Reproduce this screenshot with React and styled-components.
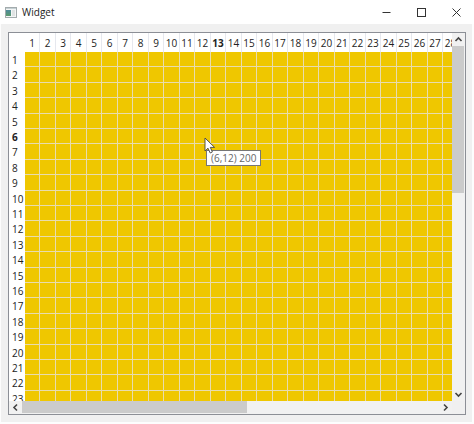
import React, { useState } from "react";
import styled, { createGlobalStyle } from "styled-components";

const GlobalStyle = createGlobalStyle`
  * {
    box-sizing: border-box;
  }
  body {
    margin: 0;
    background: #fdfdfd;
    font-family: "Open Sans", "Noto Sans", sans-serif;
    color: #222;
  }
`;

const Window = styled.div`
  display: flex;
  flex-direction: column;
  height: 100vh;
`;

const TitleBar = styled.header`
  display: flex;
  align-items: center;
  height: 24px;
  padding-left: 5px;
  background: #fff;
`;

const Title = styled.h1`
  flex: 1;
  margin: 0 0 0 5px;
  font-size: 10px;
  font-weight: 400;
  line-height: 24px;
`;

const WindowButton = styled.button`
  display: flex;
  align-items: center;
  justify-content: center;
  width: 35px;
  height: 24px;
  padding: 0;
  border: 0;
  background: transparent;
`;

const Body = styled.main`
  flex: 1;
  display: flex;
  min-height: 0;
  margin: 0 2px 2px 1px;
  padding: 8px 6px 7px 7px;
  background: #f0f0f0;
`;

const TableView = styled.div`
  flex: 1;
  display: grid;
  grid-template-columns: minmax(0, 1fr) 13px;
  grid-template-rows: minmax(0, 1fr) 13px;
  min-width: 0;
  border: 1px solid #8c8f96;
  background: #f0f0f0;
`;

const Viewport = styled.div`
  position: relative;
  overflow: hidden;
  background: #fff;
`;

const Grid = styled.table`
  table-layout: fixed;
  width: max-content;
  border-collapse: separate;
  border-spacing: 0;
  font-size: 10px;
  line-height: 14px;
`;

const Corner = styled.td`
  width: 16px;
  height: 19px;
  padding: 0;
`;

const ColumnHeader = styled.th`
  width: ${(props) => (props.$wide ? 16 : 15)}px;
  height: 19px;
  padding: 0;
  border-right: 1px solid #e6e8ee;
  font-weight: ${(props) => (props.$current ? 700 : 400)};
  text-align: center;
  white-space: nowrap;
`;

const HeaderText = styled.span`
  display: flex;
  justify-content: center;
`;

const RowHeader = styled.th`
  height: ${(props) => (props.$tall ? 16 : 15)}px;
  padding: 0 0 0 3px;
  font-weight: ${(props) => (props.$current ? 700 : 400)};
  text-align: left;
`;

const Cell = styled.td`
  padding: 0;
  border-right: 1px solid #e8dcae;
  border-bottom: 1px solid #e8dcae;
  background: #efc700;
`;

const ScrollBar = styled.div`
  display: flex;
  flex-direction: ${(props) => (props.$vertical ? "column" : "row")};
  background: #f1f1f1;
`;

const ScrollButton = styled.button`
  display: flex;
  align-items: center;
  justify-content: center;
  flex: none;
  width: 13px;
  height: 13px;
  padding: 0;
  border: 0;
  background: #f1f1f1;
`;

const Track = styled.div`
  flex: 1;
`;

const Thumb = styled.div`
  width: ${(props) => (props.$vertical ? "12px" : "54%")};
  height: ${(props) => (props.$vertical ? "43%" : "12px")};
  background: #cbcbcb;
`;

const Pointer = styled.svg`
  position: absolute;
  left: 195px;
  top: 104px;
`;

const Tooltip = styled.div`
  position: absolute;
  left: 197px;
  top: 117px;
  padding: 0 4px;
  border: 1px solid #767676;
  background: #fff;
  color: #666;
  font-size: 10px;
  line-height: 14px;
  white-space: nowrap;
`;

const numbers = Array.from({ length: 50 }, (_, i) => i + 1);

const isTall = (n) => n % 5 === 2 || n % 5 === 4;

const Arrow = ({ d }) => (
  <svg width="9" height="9" viewBox="0 0 9 9" fill="none" stroke="#444" strokeWidth="1.6">
    <path d={d} />
  </svg>
);

const AppIcon = () => (
  <svg width="12" height="11" viewBox="0 0 12 11">
    <defs>
      <linearGradient id="pane" x1="0" y1="0" x2="0" y2="1">
        <stop offset="0" stopColor="#4d8a9c" />
        <stop offset="1" stopColor="#5b9a6d" />
      </linearGradient>
    </defs>
    <rect x="0.5" y="0.5" width="11" height="10" fill="#f4f6f6" stroke="#a3abad" />
    <rect x="1" y="1" width="10" height="1" fill="#c5d0d3" />
    <rect x="1" y="3" width="5" height="6" fill="url(#pane)" />
    <rect x="7" y="3" width="3" height="6" fill="#dfe3e3" />
  </svg>
);

const App = () => {
  const [current] = useState({ row: 6, column: 13, value: 200 });

  return (
    <Window>
      <GlobalStyle />
      <TitleBar>
        <AppIcon />
        <Title>Widget</Title>
        <WindowButton aria-label="Minimize">
          <svg width="9" height="9" viewBox="0 0 9 9" stroke="#333">
            <path d="M0.5 4.5H8.5" />
          </svg>
        </WindowButton>
        <WindowButton aria-label="Maximize">
          <svg width="9" height="9" viewBox="0 0 9 9" stroke="#333" fill="none">
            <rect x="0.5" y="0.5" width="8" height="8" />
          </svg>
        </WindowButton>
        <WindowButton aria-label="Close">
          <svg width="9" height="9" viewBox="0 0 9 9" stroke="#333">
            <path d="M0.5 0.5L8.5 8.5M8.5 0.5L0.5 8.5" />
          </svg>
        </WindowButton>
      </TitleBar>
      <Body>
        <TableView>
          <Viewport>
            <Grid>
              <thead>
                <tr>
                  <Corner />
                  {numbers.map((n) => (
                    <ColumnHeader key={n} scope="col" $wide={n % 2 === 0} $current={n === current.column}>
                      <HeaderText>{n}</HeaderText>
                    </ColumnHeader>
                  ))}
                </tr>
              </thead>
              <tbody>
                {numbers.map((row) => (
                  <tr key={row}>
                    <RowHeader scope="row" $tall={isTall(row)} $current={row === current.row}>
                      {row}
                    </RowHeader>
                    {numbers.map((column) => (
                      <Cell key={column} />
                    ))}
                  </tr>
                ))}
              </tbody>
            </Grid>
            <Tooltip role="tooltip">
              ({current.row},{current.column - 1}) {current.value}
            </Tooltip>
            <Pointer width="12" height="18" viewBox="0 0 12 18">
              <path
                d="M1 1V14L4 11.2L6.2 16L8.4 15L6.3 10.4H10.6Z"
                fill="#fff"
                stroke="#444"
                strokeWidth="0.9"
              />
            </Pointer>
          </Viewport>
          <ScrollBar $vertical>
            <ScrollButton aria-label="Scroll up">
              <Arrow d="M1.5 6L4.5 3L7.5 6" />
            </ScrollButton>
            <Track>
              <Thumb $vertical />
            </Track>
            <ScrollButton aria-label="Scroll down">
              <Arrow d="M1.5 3L4.5 6L7.5 3" />
            </ScrollButton>
          </ScrollBar>
          <ScrollBar>
            <ScrollButton aria-label="Scroll left">
              <Arrow d="M6 1.5L3 4.5L6 7.5" />
            </ScrollButton>
            <Track>
              <Thumb />
            </Track>
            <ScrollButton aria-label="Scroll right">
              <Arrow d="M3 1.5L6 4.5L3 7.5" />
            </ScrollButton>
          </ScrollBar>
        </TableView>
      </Body>
    </Window>
  );
};

export default App;
